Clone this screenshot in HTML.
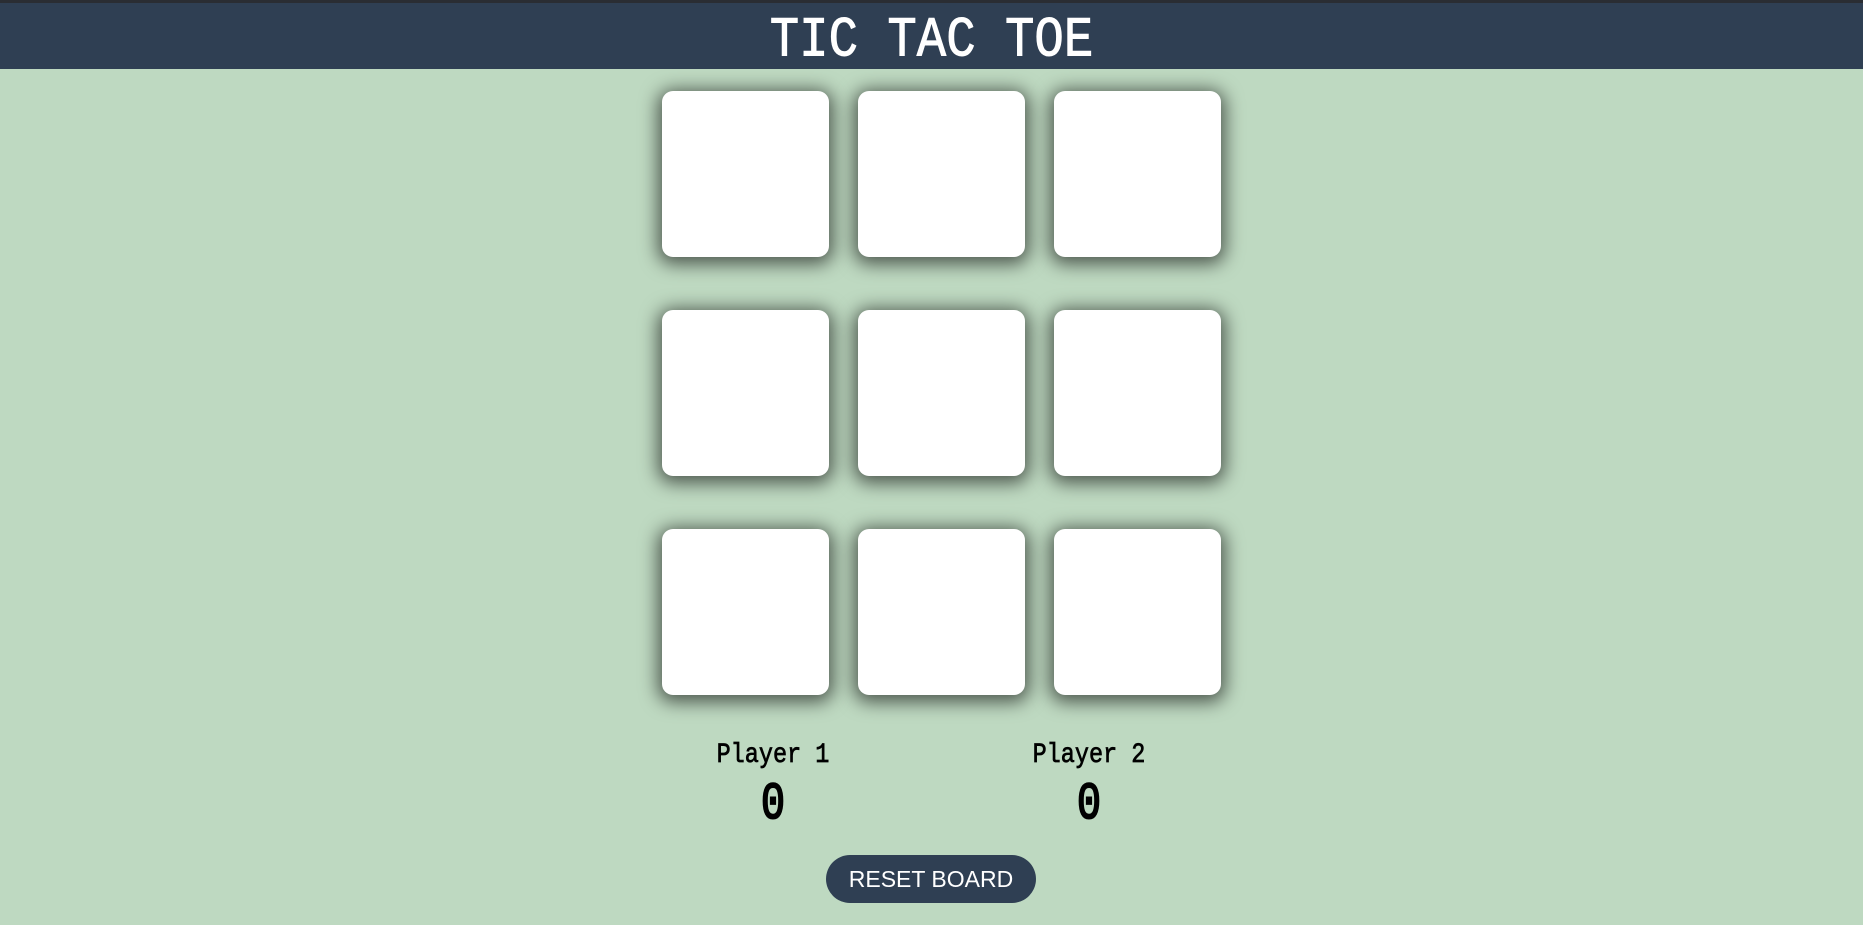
<!DOCTYPE html>
<html><head><style>
html,body{margin:0;padding:0}
body{width:1863px;height:925px;background:#bed9c1;position:relative;overflow:hidden;font-family:"Liberation Mono",monospace}
.top{position:absolute;left:0;top:0;width:1863px;height:3px;background:#2a2d33}
.hdr{position:absolute;left:0;top:3px;width:1863px;height:66px;background:#2f3f53}
.title{position:absolute;left:0;width:1863px;top:6px;text-align:center;color:#fff;font-size:49px;line-height:60px;transform:scaleY(1.15);transform-origin:center top;-webkit-text-stroke:0.8px #fff}
.c{position:absolute;width:167px;height:166px;background:#fff;border-radius:11px;box-shadow:0 3px 18px 4px rgba(0,0,0,.6)}
.lbl{position:absolute;width:200px;text-align:center;font-size:23.5px;color:#000;transform:scaleY(1.2);-webkit-text-stroke:0.6px #000}
.sc{position:absolute;width:200px;text-align:center;font-size:40px;color:#000;transform:scaleY(1.3);-webkit-text-stroke:1.6px #000}
.btn{position:absolute;left:826px;top:855px;width:210px;height:48px;border-radius:24px;background:#2f3f53;color:#fff;font-family:"Liberation Sans",sans-serif;font-size:23px;line-height:48px;text-align:center}
</style></head><body>
<div class="top"></div>
<div class="hdr"></div>
<div class="title">TIC TAC TOE</div>
<div class="c" style="left:662px;top:91px"></div>
<div class="c" style="left:858px;top:91px"></div>
<div class="c" style="left:1054px;top:91px"></div>
<div class="c" style="left:662px;top:310px"></div>
<div class="c" style="left:858px;top:310px"></div>
<div class="c" style="left:1054px;top:310px"></div>
<div class="c" style="left:662px;top:529px"></div>
<div class="c" style="left:858px;top:529px"></div>
<div class="c" style="left:1054px;top:529px"></div>
<div class="lbl" style="left:673px;top:742px">Player 1</div>
<div class="lbl" style="left:989px;top:742px">Player 2</div>
<div class="sc" style="left:673px;top:783px">0</div>
<div class="sc" style="left:989px;top:783px">0</div>
<div class="btn">RESET BOARD</div>
</body></html>
